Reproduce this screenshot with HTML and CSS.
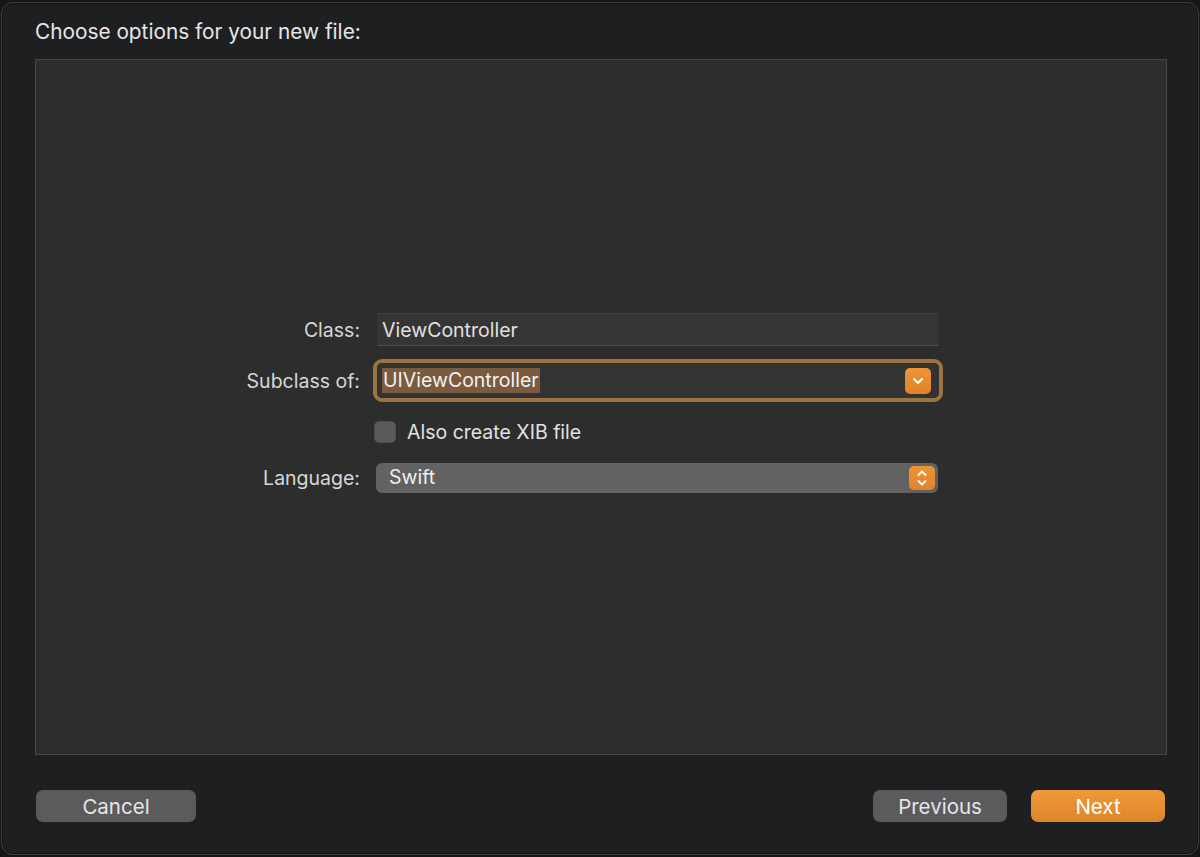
FILE: index.html
```html
<!DOCTYPE html>
<html lang="en">
<head>
  <meta charset="UTF-8">
  <meta name="viewport" content="width=device-width, initial-scale=1.0">
  <link rel="stylesheet" href="styles.css">
  <title>New File Options</title>
</head>
<body>
  <!-- Sheet window -->
  <div class="sheet">
    <h1 class="title">Choose options for your new file:</h1>

    <div class="panel">
      <div class="form">
        <div class="row row-class">
          <label class="label" for="className">Class:</label>
          <input type="text" class="field" id="className" value="ViewController">
        </div>

        <div class="row row-subclass">
          <label class="label" for="subclass">Subclass of:</label>
          <div class="combo">
            <div class="combo-inner">
              <span class="selected-text" id="subclass">UIViewController</span>
              <span class="combo-btn">
                <svg width="12" height="8" viewBox="0 0 12 8"><path d="M2 2 L6 6 L10 2" fill="none" stroke="#fff" stroke-width="2" stroke-linecap="round" stroke-linejoin="round"/></svg>
              </span>
            </div>
          </div>
        </div>

        <div class="row row-check">
          <span></span>
          <div class="check-row">
            <span class="checkbox"></span>
            <span class="check-label">Also create XIB file</span>
          </div>
        </div>

        <div class="row row-language">
          <span class="label">Language:</span>
          <div class="popup">
            <span>Swift</span>
            <span class="stepper">
              <svg width="12" height="18" viewBox="0 0 12 18"><path d="M2.5 6 L6 2.5 L9.5 6 M2.5 12 L6 15.5 L9.5 12" fill="none" stroke="#fff" stroke-width="1.8" stroke-linecap="round" stroke-linejoin="round"/></svg>
            </span>
          </div>
        </div>
      </div>
    </div>

    <div class="footer">
      <button class="btn cancel">Cancel</button>
      <div class="right-buttons">
        <button class="btn">Previous</button>
        <button class="btn next">Next</button>
      </div>
    </div>
  </div>
</body>
</html>
```

FILE: styles.css
```css
html, body {
  margin: 0;
  padding: 0;
}
body {
  background-color: #151617;
  font-family: Inter, "Liberation Sans", Arial, sans-serif;
  color: #e2e2e2;
  width: 1200px;
  height: 857px;
  overflow: hidden;
}
.sheet {
  box-sizing: border-box;
  margin: 2px 1px 0 1px;
  height: 853px;
  background-color: #1e1f21;
  border: 1px solid #3e3f41;
  border-radius: 12px;
  box-shadow: inset 0 0 0 1px #121314;
  padding: 0 31px 0 33px;
}
.title {
  margin: 0;
  padding-top: 17px;
  height: 56px;
  font-size: 20.8px;
  line-height: 24px;
  font-weight: 400;
  color: #e6e6e6;
  box-sizing: border-box;
}
.panel {
  box-sizing: border-box;
  height: 696px;
  background-color: #2d2d2d;
  border: 1px solid #464646;
  padding-top: 253px;
}
.form {
  display: flex;
  flex-direction: column;
}
.row {
  display: grid;
  grid-template-columns: 324px 562px;
  column-gap: 17px;
  align-items: center;
}
.row-subclass {
  margin-top: 13px;
}
.row-check {
  margin-top: 18px;
}
.row-language {
  margin-top: 20px;
}
.label {
  text-align: right;
  font-size: 19.5px;
  color: #d6d6d6;
}
.field {
  box-sizing: border-box;
  height: 33px;
  width: 562px;
  margin: 0;
  padding: 0 5px;
  border: none;
  border-top: 1px solid #3e3e3e;
  border-bottom: 1px solid #4c4c4c;
  background-color: #353535;
  color: #e0e0e0;
  font-family: inherit;
  font-size: 19.5px;
  outline: none;
}
.combo {
  box-sizing: border-box;
  height: 43px;
  width: 570px;
  margin-left: -4px;
  border: 4px solid #9b7541;
  border-radius: 9px;
}
.combo-inner {
  height: 100%;
  background-color: #333333;
  border-radius: 5px;
  display: flex;
  align-items: center;
  justify-content: space-between;
  padding: 0 8px 0 5px;
}
.selected-text {
  background-color: #7b5b3f;
  color: #f2f2f2;
  font-size: 19.5px;
  line-height: 25px;
  padding: 0 1px;
}
.combo-btn {
  width: 26px;
  height: 26px;
  border-radius: 5px;
  background: linear-gradient(#ee9436, #e0822a);
  display: flex;
  align-items: center;
  justify-content: center;
}
.check-row {
  display: flex;
  align-items: center;
  gap: 11px;
  margin-left: -3px;
  height: 23px;
}
.checkbox {
  width: 22px;
  height: 22px;
  border-radius: 5px;
  background-color: #5a5a5a;
  border: 1px solid #4e4e4e;
  box-sizing: border-box;
}
.check-label {
  font-size: 19.5px;
  color: #e2e2e2;
}
.popup {
  box-sizing: border-box;
  height: 30px;
  width: 562px;
  margin-left: -1px;
  border-radius: 6px;
  background-color: #626262;
  display: flex;
  align-items: center;
  justify-content: space-between;
  padding: 0 3px 0 13px;
  font-size: 19.5px;
  color: #f0f0f0;
}
.popup > span:first-child {
  margin-top: -2px;
}
.stepper {
  width: 26px;
  height: 24px;
  border-radius: 5px;
  background: linear-gradient(#ee9436, #e0822a);
  display: flex;
  align-items: center;
  justify-content: center;
}
.footer {
  display: flex;
  justify-content: space-between;
  margin-top: 35px;
  padding: 0 2px 0 1px;
}
.right-buttons {
  display: flex;
  gap: 24px;
}
.btn {
  height: 32px;
  width: 134px;
  border: none;
  border-radius: 7px;
  background-color: #5b5b5d;
  color: #e6e6e6;
  font-family: inherit;
  font-size: 20.5px;
  padding: 0;
  cursor: pointer;
}
.cancel {
  width: 160px;
}
.next {
  background: linear-gradient(#ef9a3c, #de8429);
  color: #fff;
}
```
